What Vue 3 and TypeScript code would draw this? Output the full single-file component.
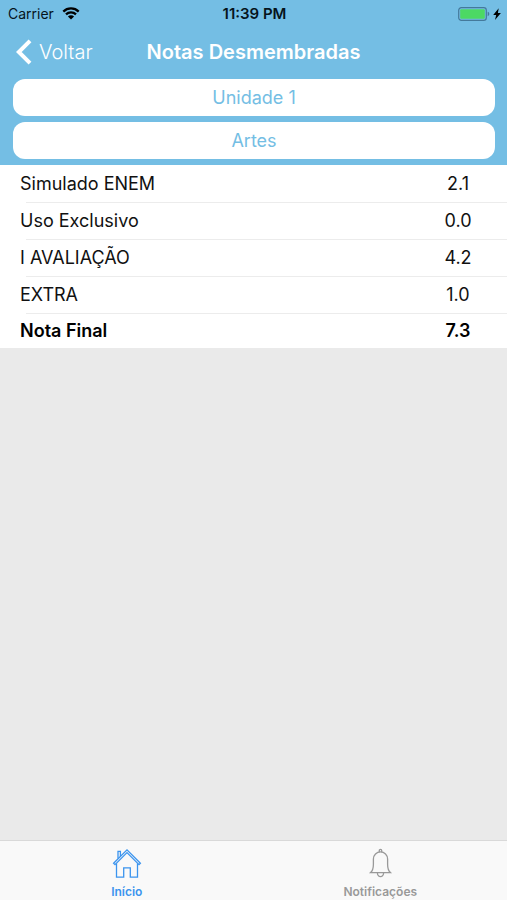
<script setup lang="ts">
import { ref } from 'vue'

interface Grade {
  label: string
  value: number
  total?: boolean
}

const grades: Grade[] = [
  { label: 'Simulado ENEM', value: 2.1 },
  { label: 'Uso Exclusivo', value: 0 },
  { label: 'I AVALIAÇÃO', value: 4.2 },
  { label: 'EXTRA', value: 1 },
  { label: 'Nota Final', value: 7.3, total: true },
]

const activeTab = ref<'home' | 'notifications'>('home')
</script>

<template>
  <div class="screen">
    <header class="header">
      <div class="status">
        <div class="carrier">
          <span>Carrier</span>
          <svg class="wifi" viewBox="0 0 18 13" aria-hidden="true">
            <path d="M1.3 4.6a11 11 0 0 1 15.4 0" />
            <path d="M4 7.3a7.2 7.2 0 0 1 10 0" />
            <path class="dot" d="M9 12.6 5.9 9.5a4.4 4.4 0 0 1 6.2 0z" />
          </svg>
        </div>
        <span class="time">11:39 PM</span>
        <div class="power">
          <svg class="battery" viewBox="0 0 32 14" aria-hidden="true">
            <rect class="shell" x="0.7" y="0.7" width="27.6" height="12.6" rx="2.6" />
            <rect class="charge" x="2.2" y="2.2" width="24.6" height="9.6" rx="1" />
            <path class="cap" d="M29.7 4.8c2.1.5 2.1 3.9 0 4.4z" />
          </svg>
          <svg class="bolt" viewBox="0 0 8 12" aria-hidden="true">
            <path d="M5.7.2.2 7h3L2 11.900 7.900 4.900H4.900z" />
          </svg>
        </div>
      </div>

      <nav class="navbar">
        <button class="back" type="button">
          <svg class="chevron" viewBox="0 0 16 26" aria-hidden="true">
            <path d="M14 1.8 2.8 13 14 24.2" />
          </svg>
          <span>Voltar</span>
        </button>
        <h1 class="title">Notas Desmembradas</h1>
      </nav>

      <div class="filters">
        <button class="filter" type="button">Unidade 1</button>
        <button class="filter" type="button">Artes</button>
      </div>
    </header>

    <main class="content">
      <table class="grades">
        <tbody>
          <tr v-for="grade in grades" :key="grade.label" :class="{ total: grade.total }">
            <th scope="row">{{ grade.label }}</th>
            <td>{{ grade.value.toFixed(1) }}</td>
          </tr>
        </tbody>
      </table>
    </main>

    <footer class="tabbar">
      <button
        class="tab"
        :class="{ active: activeTab === 'home' }"
        type="button"
        @click="activeTab = 'home'"
      >
        <svg class="tab-icon" viewBox="0 0 30 30" aria-hidden="true">
          <path d="M1.6 15.2 15 1.8l13.4 13.4-1.4 1.4L15 4.6 3 16.6z" />
          <path d="M4.5 15.4v13.8h7.2v-9.4h6.6v9.4h7.2V15.4" />
          <path d="M6 10.6V3.4h2.4v4.8" />
        </svg>
        <span>Início</span>
      </button>
      <button
        class="tab"
        :class="{ active: activeTab === 'notifications' }"
        type="button"
        @click="activeTab = 'notifications'"
      >
        <svg class="tab-icon" viewBox="0 0 30 30" aria-hidden="true">
          <path d="M5.6 24.6c2.4-2.2 2.8-5.4 2.8-8.4V11a7.1 7.1 0 0 1 14.2 0v5.2c0 3 .4 6.2 2.8 8.4z" />
          <path d="M14.3 4.2V2.6a1.2 1.2 0 0 1 2.4 0v1.6" />
          <path d="M12.4 24.8a3.1 3.8 0 0 0 6.2 0" />
        </svg>
        <span>Notificações</span>
      </button>
    </footer>
  </div>
</template>

<style>
body {
  margin: 0;
  background: #eaeaea;
}
</style>

<style scoped>
.screen {
  display: flex;
  flex-direction: column;
  min-height: 100vh;
  background: #eaeaea;
  color: #111;
  font-family: Inter, "Liberation Sans", sans-serif;
}

button {
  margin: 0;
  padding: 0;
  border: 0;
  background: none;
  font: inherit;
  cursor: pointer;
}

svg {
  display: block;
  fill: none;
}

.header {
  padding-bottom: 6px;
  background: #74bee4;
}

.status {
  display: grid;
  grid-template-columns: 1fr auto 1fr;
  align-items: center;
  height: 27px;
  padding: 0 6px 0 8px;
  font-size: 14px;
  color: #06141c;
}

.carrier,
.power {
  display: flex;
  align-items: center;
}

.carrier {
  gap: 8px;
}

.wifi {
  width: 18px;
  height: 13px;
  stroke: #000;
  stroke-width: 2.3;
}

.wifi .dot {
  fill: #000;
  stroke: none;
}

.time {
  font-size: 15px;
  font-weight: 600;
}

.power {
  justify-content: flex-end;
  gap: 3px;
}

.battery {
  width: 32px;
  height: 14px;
}

.shell {
  stroke: #44799b;
  stroke-width: 1.2;
}

.charge {
  fill: #4cd964;
}

.cap {
  fill: #44799b;
}

.bolt {
  width: 8px;
  height: 12px;
  fill: #000;
}

.navbar {
  display: grid;
  grid-template-columns: 1fr auto 1fr;
  align-items: center;
  height: 50px;
  padding: 0 16px 2px;
  color: #fff;
}

.back {
  display: flex;
  align-items: center;
  justify-self: start;
  gap: 7px;
  color: #fff;
  font-size: 20px;
  font-weight: 300;
}

.chevron {
  width: 16px;
  height: 26px;
  stroke: #fff;
  stroke-width: 4;
}

.title {
  margin: 0;
  font-size: 20px;
  font-weight: 600;
  line-height: 24px;
}

.filters {
  display: grid;
  gap: 6px;
  padding: 0 12px 0 13px;
}

.filter {
  height: 37px;
  border-radius: 12px;
  background: #fff;
  color: #74bee4;
  font-size: 18px;
}

.content {
  flex: 1;
}

.grades {
  width: 100%;
  border-collapse: collapse;
  background: #fff;
  font-size: 18px;
}

.grades th,
.grades td {
  height: 37px;
  padding: 0;
  font-weight: 400;
  line-height: 24px;
}

.grades th {
  padding-left: 20px;
  text-align: left;
}

.grades td {
  width: 98px;
  text-align: center;
}

.grades tr + tr {
  background: linear-gradient(#ececec, #ececec) 26px 0 / 100% 1px no-repeat;
}

.grades .total th,
.grades .total td {
  height: 35px;
  font-weight: 600;
  color: #000;
}

.tabbar {
  display: grid;
  grid-template-columns: 1fr 1fr;
  height: 59px;
  border-top: 1px solid #d9d9d9;
  background: #f9f9f9;
}

.tab {
  display: flex;
  flex-direction: column;
  align-items: center;
  gap: 6px;
  padding-top: 7px;
  color: #999;
  font-size: 12px;
  font-weight: 600;
  line-height: 16px;
}

.tab.active {
  color: #3b94ee;
}

.tab-icon {
  width: 30px;
  height: 30px;
  stroke: currentColor;
  stroke-width: 1.3;
}
</style>
